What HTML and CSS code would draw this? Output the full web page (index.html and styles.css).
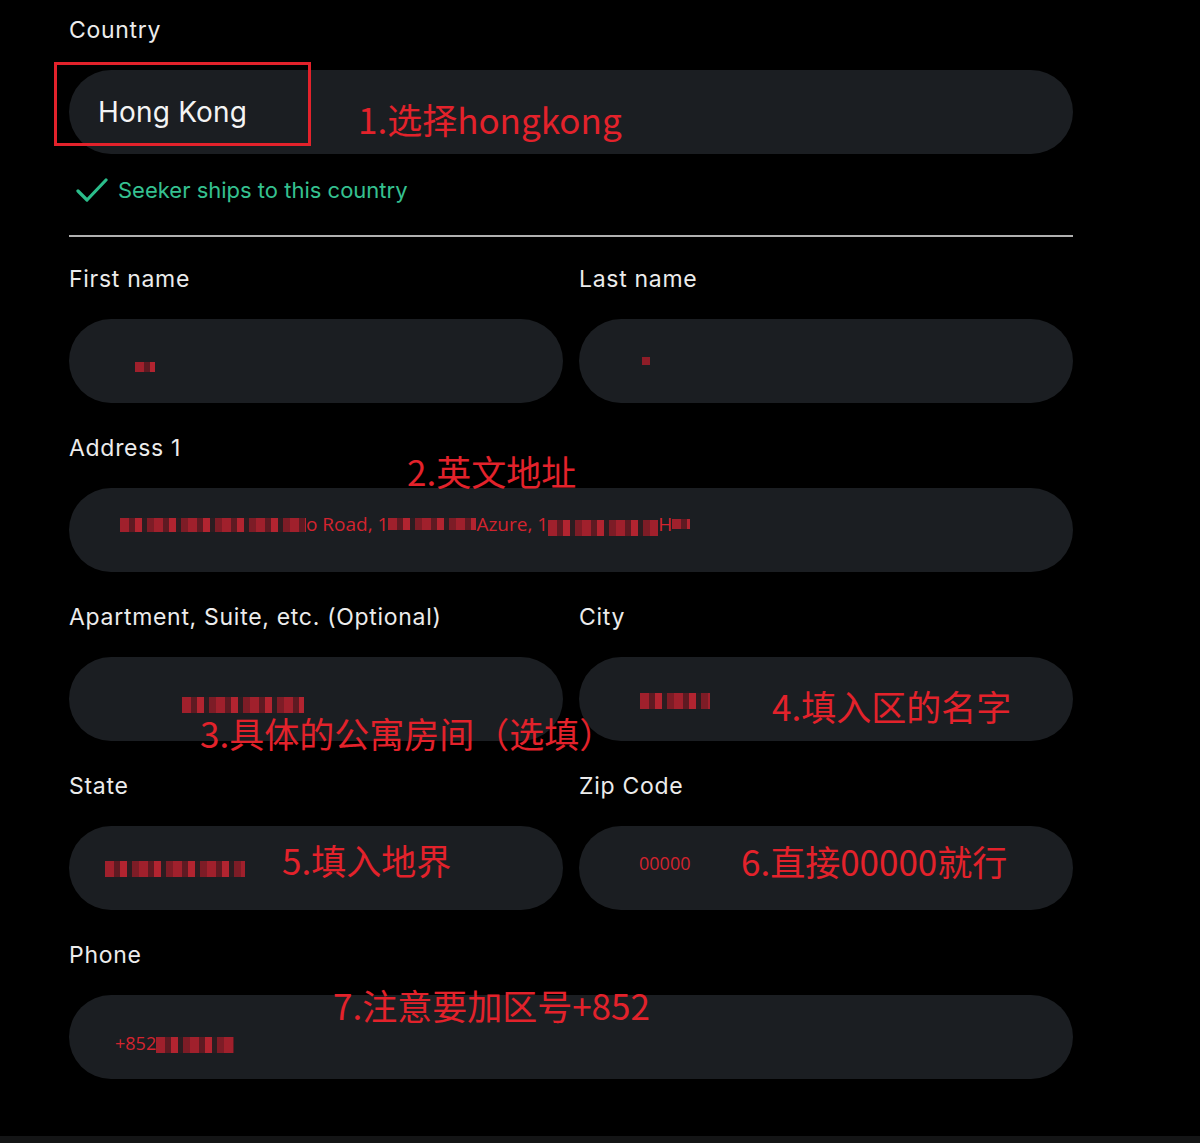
FILE: index.html
```html
<!DOCTYPE html>
<html lang="zh-CN">
<head>
    <meta charset="UTF-8">
    <meta name="viewport" content="width=device-width, initial-scale=1.0">
    <title>Shipping Address</title>
    <link rel="stylesheet" href="styles.css">
</head>
<body>
    <div class="page">
        <form class="form">
            <div class="field">
                <div class="label">Country</div>
                <div class="input input-country">Hong Kong</div>
            </div>
            <div class="ships-note">
                <svg class="check-icon" viewBox="0 0 32 26" fill="none" xmlns="http://www.w3.org/2000/svg">
                    <path d="M2 14 L11 23 L30 3" stroke="currentColor" stroke-width="3.2" stroke-linecap="round" stroke-linejoin="round" />
                </svg>
                Seeker ships to this country
            </div>
            <div class="divider"></div>

            <div class="row">
                <div class="field">
                    <div class="label">First name</div>
                    <div class="input"><span class="blur blur-first"></span></div>
                </div>
                <div class="field">
                    <div class="label">Last name</div>
                    <div class="input"><span class="blur blur-last"></span></div>
                </div>
            </div>

            <div class="field">
                <div class="label">Address 1</div>
                <div class="input input-address">
                    <span class="blur blur-a1"></span><span class="value">o Road, 1</span><span class="blur blur-a2"></span><span class="value">Azure, 1</span><span class="blur blur-a3"></span><span class="value">H</span><span class="blur blur-a4"></span>
                </div>
            </div>

            <div class="row">
                <div class="field">
                    <div class="label">Apartment, Suite, etc. (Optional)</div>
                    <div class="input input-apt"><span class="blur blur-apt"></span></div>
                </div>
                <div class="field">
                    <div class="label">City</div>
                    <div class="input input-city"><span class="blur blur-city"></span></div>
                </div>
            </div>

            <div class="row">
                <div class="field">
                    <div class="label">State</div>
                    <div class="input input-state"><span class="blur blur-state"></span></div>
                </div>
                <div class="field">
                    <div class="label">Zip Code</div>
                    <div class="input input-zip"><span class="value">00000</span></div>
                </div>
            </div>

            <div class="field">
                <div class="label">Phone</div>
                <div class="input input-phone"><span class="value">+852</span><span class="blur blur-phone"></span></div>
            </div>
        </form>

        <div class="bottom-bar"></div>

        <!-- red notes drawn over the screenshot -->
        <div class="mark-box"></div>
        <div class="note note-1">1.选择hongkong</div>
        <div class="note note-2">2.英文地址</div>
        <div class="note note-3">3.具体的公寓房间（选填）</div>
        <div class="note note-4">4.填入区的名字</div>
        <div class="note note-5">5.填入地界</div>
        <div class="note note-6">6.直接00000就行</div>
        <div class="note note-7">7.注意要加区号+852</div>
    </div>
</body>
</html>
```

FILE: styles.css
```css
* {
    box-sizing: border-box;
}
body {
    margin: 0;
    padding: 0;
    background-color: #000;
    font-family: Inter, "Open Sans", sans-serif;
    color: #ececec;
}
.page {
    position: relative;
    width: 1200px;
    height: 1143px;
    overflow: hidden;
}
.form {
    width: 1004px;
    margin-left: 69px;
    padding-top: 16px;
    display: flex;
    flex-direction: column;
}
.field {
    display: flex;
    flex-direction: column;
    flex: 1;
    margin-bottom: 31px;
}
.label {
    font-size: 23px;
    line-height: 28px;
    height: 28px;
    margin-bottom: 26px;
    letter-spacing: 0.7px;
}
.row {
    display: flex;
    gap: 16px;
}
.input {
    height: 84px;
    border-radius: 42px;
    background-color: #1b1e22;
    display: flex;
    align-items: center;
    padding: 0 46px;
    font-family: "Open Sans", sans-serif;
    font-size: 18px;
    color: #d3242f;
}
.input-country {
    padding-left: 29px;
    font-family: Inter, sans-serif;
    font-size: 28px;
    letter-spacing: 0.2px;
    color: #f4f4f4;
}
.input-address {
    padding-left: 51px;
    padding-bottom: 12px;
    font-size: 19px;
}
.input-phone {
    padding-top: 12px;
}
.input-zip {
    padding-left: 60px;
    padding-bottom: 10px;
}
.value {
    white-space: pre;
}

/* pixelated (blurred out) private values */
.blur {
    display: inline-block;
    height: 10px;
    background: repeating-linear-gradient(90deg, #a0202c 0 9px, #5e1a22 9px 15px, #b22430 15px 22px, #2c1d21 22px 27px, #7d1c26 27px 34px);
}
.blur-first { width: 20px; margin-left: 20px; margin-top: 12px; }
.blur-last { width: 8px; height: 8px; margin-left: 17px; background: #8e1d28; }
.blur-a1 { width: 186px; height: 14px; margin-top: 2px; }
.blur-a2 { width: 88px; height: 12px; }
.blur-a3 { width: 110px; height: 16px; margin-top: 8px; }
.blur-a4 { width: 18px; }
.input-apt { padding-left: 113px; }
.blur-apt { width: 122px; height: 16px; margin-top: 12px; }
.input-city { padding-left: 61px; }
.blur-city { width: 70px; height: 16px; margin-top: 4px; }
.input-state { padding-left: 36px; }
.blur-state { width: 140px; height: 16px; margin-top: 2px; }
.blur-phone { width: 78px; height: 16px; margin-top: 4px; }

.ships-note {
    display: flex;
    align-items: center;
    margin-top: -9px;
    height: 28px;
    font-size: 22px;
    color: #35c190;
}
.check-icon {
    width: 32px;
    height: 26px;
    margin-left: 7px;
    margin-right: 10px;
    color: #2bbd8b;
}
.divider {
    height: 2px;
    background-color: #b0b0b0;
    margin-top: 31px;
    margin-bottom: 28px;
}
.bottom-bar {
    position: absolute;
    left: 0;
    right: 0;
    bottom: 0;
    height: 7px;
    background-color: #141516;
}

.mark-box {
    position: absolute;
    left: 54px;
    top: 62px;
    width: 257px;
    height: 84px;
    border: 3px solid #e3222b;
}
.note {
    position: absolute;
    font-family: "Noto Sans CJK SC", sans-serif;
    font-size: 35px;
    line-height: 36px;
    color: #e3222b;
    white-space: nowrap;
}
.note-1 { left: 358px; top: 101px; }
.note-2 { left: 407px; top: 453px; }
.note-3 { left: 200px; top: 715px; }
.note-4 { left: 772px; top: 688px; }
.note-5 { left: 282px; top: 842px; }
.note-6 { left: 741px; top: 843px; }
.note-7 { left: 333px; top: 987px; }
```
